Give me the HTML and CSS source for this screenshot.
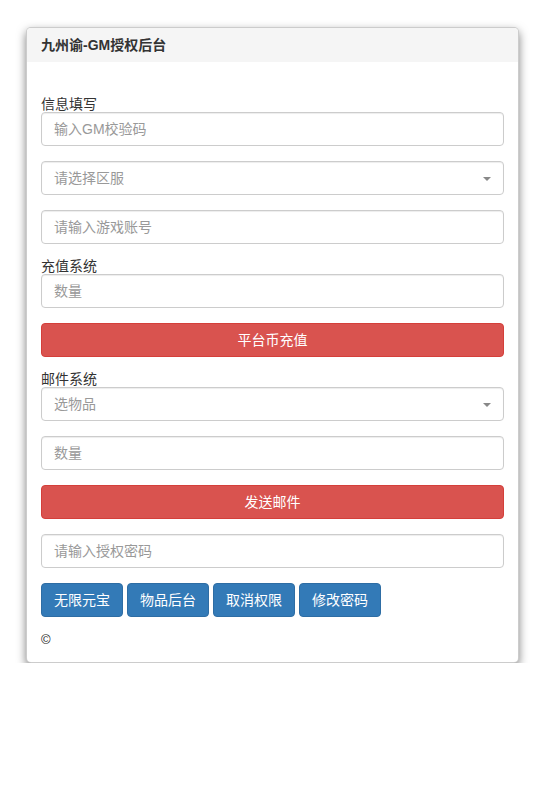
FILE: index.html
```html
<!DOCTYPE html>
<html lang="zh-CN">
<head>
<meta charset="utf-8">
<title>九州谕-GM授权后台</title>
<link rel="stylesheet" href="styles.css">
</head>
<body>
<div class="wrap">
  <div class="panel">
    <div class="panel-heading">九州谕-GM授权后台</div>
    <div class="panel-body">
      <div class="spacer"></div>
      <div class="group">
        <div class="label">信息填写</div>
        <div class="input placeholder">输入GM校验码</div>
      </div>
      <div class="group">
        <div class="input select placeholder">请选择区服<span class="caret"></span></div>
      </div>
      <div class="group">
        <div class="input placeholder">请输入游戏账号</div>
      </div>
      <div class="group">
        <div class="label">充值系统</div>
        <div class="input placeholder">数量</div>
      </div>
      <div class="group">
        <div class="btn btn-danger btn-block">平台币充值</div>
      </div>
      <div class="group">
        <div class="label">邮件系统</div>
        <div class="input select placeholder">选物品<span class="caret"></span></div>
      </div>
      <div class="group">
        <div class="input placeholder">数量</div>
      </div>
      <div class="group">
        <div class="btn btn-danger btn-block">发送邮件</div>
      </div>
      <div class="group">
        <div class="input placeholder">请输入授权密码</div>
      </div>
      <div class="btn-row">
        <div class="btn btn-primary">无限元宝</div>
        <div class="btn btn-primary">物品后台</div>
        <div class="btn btn-primary">取消权限</div>
        <div class="btn btn-primary">修改密码</div>
      </div>
      <div class="copy">©</div>
    </div>
  </div>
</div>
</body>
</html>
```
FILE: styles.css
```css
* { box-sizing: border-box; }
html, body { margin: 0; padding: 0; background: #fff; }
body {
  font-family: "Liberation Sans", "Noto Sans CJK SC", sans-serif;
  font-size: 14px;
  line-height: 20px;
  color: #333;
}
.wrap { padding: 27px 26px 0 26px; }
.panel {
  background: #fff;
  border: 1px solid rgba(0,0,0,.2);
  border-radius: 5px;
  box-shadow: 0 4px 10px rgba(0,0,0,.5);
  overflow: hidden;
}
.panel-heading {
  background: #f5f5f5;
  height: 34px;
  padding: 7px 14px;
  font-weight: bold;
  font-size: 14px;
  line-height: 20px;
  color: #333;
}
.panel-body { padding: 15px 14px 12px 14px; }
.spacer { height: 20px; }
.group { margin-bottom: 15px; }
.label { line-height: 15px; height: 15px; color: #333; }
.input {
  position: relative;
  height: 34px;
  border: 1px solid #ccc;
  border-radius: 4px;
  padding: 6px 12px;
  line-height: 20px;
  box-shadow: inset 0 1px 1px rgba(0,0,0,.075);
  background: #fff;
}
.placeholder { color: #999; }
.caret {
  position: absolute;
  right: 12px;
  top: 15px;
  width: 0;
  height: 0;
  border-left: 4px solid transparent;
  border-right: 4px solid transparent;
  border-top: 4px solid #888;
}
.btn {
  display: inline-block;
  height: 34px;
  padding: 6px 12px;
  line-height: 20px;
  font-size: 14px;
  text-align: center;
  border: 1px solid transparent;
  border-radius: 4px;
  color: #fff;
}
.btn-block { display: block; width: 100%; }
.btn-danger { background: #d9534f; border-color: #d43f3a; }
.btn-primary { background: #337ab7; border-color: #2e6da4; }
.btn-row { display: flex; gap: 4px; }
.copy { margin-top: 10px; padding-top: 3px; line-height: 20px; font-size: 13px; color: #222; }
```
